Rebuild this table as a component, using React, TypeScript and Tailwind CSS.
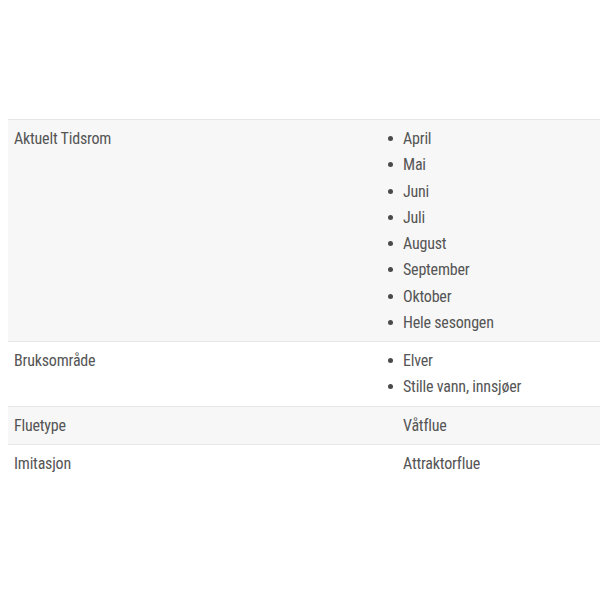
import React from "react";

type Row = { label: string; items?: string[]; value?: string; gray: boolean };

const rows: Row[] = [
  {
    label: "Aktuelt Tidsrom",
    items: ["April", "Mai", "Juni", "Juli", "August", "September", "Oktober", "Hele sesongen"],
    gray: true,
  },
  { label: "Bruksområde", items: ["Elver", "Stille vann, innsjøer"], gray: false },
  { label: "Fluetype", value: "Våtflue", gray: true },
  { label: "Imitasjon", value: "Attraktorflue", gray: false },
];

export default function App() {
  return (
    <div className="w-[600px] h-[600px] bg-white overflow-hidden font-['Roboto',sans-serif] font-stretch-condensed">
      <div className="pt-[119px] pl-[8px]">
        {rows.map((r) => (
          <div
            key={r.label}
            className={`flex border-t border-[#e6e6e6] text-[16px] leading-[26.25px] tracking-[-0.2px] text-[#555555] ${
              r.gray ? "bg-[#f7f7f7]" : "bg-white"
            }`}
          >
            <div className="w-[389px] shrink-0 px-[6px] pt-[6px] pb-[5px]">{r.label}</div>
            <div className="flex-1 px-[6px] pt-[6px] pb-[5px]">
              {r.items ? (
                <ul className="list-none">
                  {r.items.map((it) => (
                    <li key={it} className="relative">
                      <span className="absolute left-[-15px] top-[10px] w-[5px] h-[5px] rounded-full bg-[#4a4a4a]" />
                      {it}
                    </li>
                  ))}
                </ul>
              ) : (
                r.value
              )}
            </div>
          </div>
        ))}
      </div>
    </div>
  );
}
